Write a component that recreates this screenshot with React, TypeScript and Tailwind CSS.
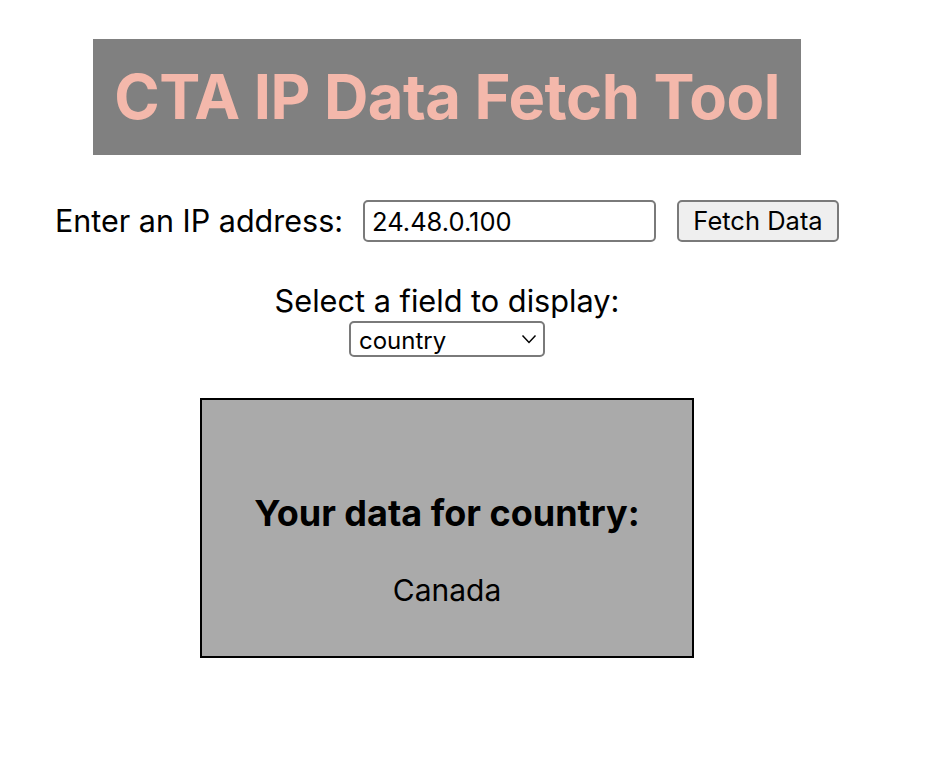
import React, { useState } from "react";

export default function App() {
  const [ip, setIp] = useState("24.48.0.100");
  const [field, setField] = useState("country");

  return (
    <div className="w-[894px] bg-white pt-[39px] font-['Inter',sans-serif] text-black">
      {/* Title banner */}
      <div className="flex justify-center">
        <div className="flex h-[116px] w-[708px] items-center justify-center bg-[#808080]">
          <h1 className="text-[61.5px] font-bold leading-none tracking-[-0.5px] text-[#f4b8ab]">
            CTA IP Data Fetch Tool
          </h1>
        </div>
      </div>

      {/* IP input row */}
      <div className="mt-[45px] flex items-center justify-center">
        <label className="text-[30.5px] leading-none">Enter an IP address:</label>
        <input
          value={ip}
          onChange={(e) => setIp(e.target.value)}
          className="ml-[20px] h-[42px] w-[293px] rounded-[5px] border-2 border-[#7a7a7a] px-[7px] text-[25.5px] outline-none"
        />
        <button className="ml-[21px] h-[42px] w-[162px] rounded-[5px] border-2 border-[#7a7a7a] bg-[#efefef] text-[25.5px]">
          Fetch Data
        </button>
      </div>

      {/* Field select */}
      <div className="mt-[42px] flex flex-col items-center">
        <label className="text-[30.7px] leading-[34px]">Select a field to display:</label>
        <div className="relative mt-[3px] h-[36px] w-[196px]">
          <select
            value={field}
            onChange={(e) => setField(e.target.value)}
            className="h-full w-full appearance-none rounded-[5px] border-2 border-[#7a7a7a] bg-white px-[8px] text-[24px] outline-none"
          >
            <option value="country">country</option>
            <option value="city">city</option>
            <option value="region">region</option>
            <option value="isp">isp</option>
          </select>
          <svg
            className="pointer-events-none absolute right-[8px] top-[13px] h-[10px] w-[16px]"
            viewBox="0 0 16 10"
            fill="none"
            stroke="black"
            strokeWidth="1.5"
          >
            <path d="M1.5 1.5 L8 8.5 L14.5 1.5" />
          </svg>
        </div>
      </div>

      {/* Result box */}
      <div className="mt-[41px] flex justify-center">
        <div className="h-[260px] w-[494px] border-2 border-black bg-[#aaaaaa] pt-[95px] text-center">
          <h2 className="text-[36px] font-bold leading-none">Your data for {field}:</h2>
          <p className="mt-[44px] text-[30px] leading-none">Canada</p>
        </div>
      </div>
    </div>
  );
}
